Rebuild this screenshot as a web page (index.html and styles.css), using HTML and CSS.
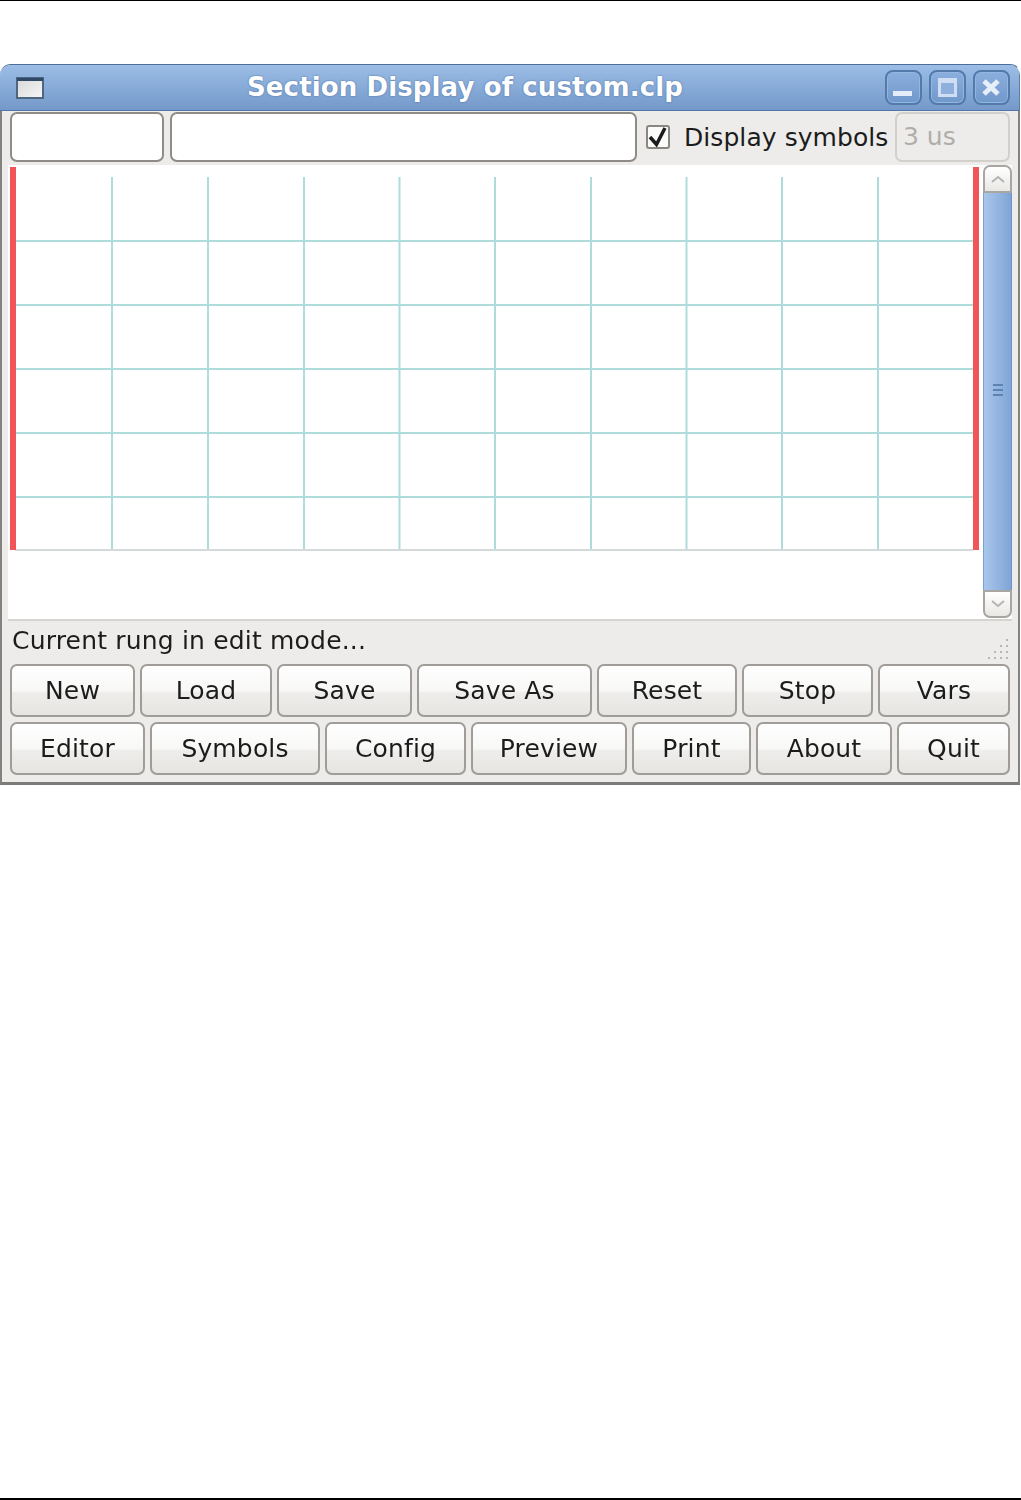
FILE: index.html
```html
<!DOCTYPE html>
<html lang="en">
<head>
<meta charset="utf-8">
<title>Section Display of custom.clp</title>
<link rel="stylesheet" href="styles.css">
</head>
<body>
<div class="page">
  <div class="window">
    <div class="titlebar">
      <svg class="win-icon" width="28" height="22" viewBox="0 0 28 22">
        <defs><linearGradient id="wi" x1="0" y1="0" x2="1" y2="1"><stop offset="0" stop-color="#d8d8d8"/><stop offset="1" stop-color="#f6f6f6"/></linearGradient></defs>
        <rect x="1" y="1" width="26" height="20" fill="url(#wi)" stroke="#4f6680" stroke-width="2"/>
        <rect x="1" y="1" width="26" height="3" fill="#2f4a68"/>
      </svg>
      <div class="title">Section Display of custom.clp</div>
      <div class="win-buttons">
        <div class="win-btn"><svg width="37" height="35" viewBox="0 0 37 35"><rect x="8" y="21" width="19" height="5" fill="#e3ecf8"/></svg></div>
        <div class="win-btn"><svg width="37" height="35" viewBox="0 0 37 35"><rect x="10.500" y="9.500" width="16" height="16" fill="#8fb0dc" stroke="#cfdef2" stroke-width="3"/><rect x="11" y="10" width="15" height="3" fill="#cfdef2"/></svg></div>
        <div class="win-btn"><svg width="37" height="35" viewBox="0 0 37 35"><path d="M11 11 L25 24 M25 11 L11 24" stroke="#e6eef9" stroke-width="5" fill="none"/></svg></div>
      </div>
    </div>
    <div class="content">
      <div class="toolbar">
        <div class="entry entry-small"></div>
        <div class="entry entry-wide"></div>
        <div class="check">
          <svg class="check-box" width="24" height="24" viewBox="0 0 24 24"><rect x="1" y="1" width="22" height="22" rx="2" fill="#fbfbfa" stroke="#8a8782" stroke-width="2"/><path d="M4 12 L10.500 19.500 L19 3" fill="none" stroke="#1c1c1c" stroke-width="3.500"/></svg>
          <span class="check-label">Display symbols</span>
        </div>
        <div class="entry entry-ro">3 us</div>
      </div>
      <div class="view">
        <div class="canvas">
          <svg width="976" height="455" viewBox="0 0 976 455">
            <g stroke="#aedcdc" stroke-width="2">
              <path d="M7 76H965M7 140H965M7 204H965M7 268H965M7 332H965" fill="none"/>
              <path d="M104 12V385M200 12V385M296 12V385M391.500 12V385M487 12V385M583 12V385M678.500 12V385M774 12V385M870 12V385" fill="none"/>
            </g>
            <path d="M7 385H965" stroke="#d4d9d9" stroke-width="2"/>
            <rect x="2" y="2" width="6" height="383" fill="#f25557"/>
            <rect x="965" y="2" width="6" height="383" fill="#f25557"/>
          </svg>
        </div>
        <div class="scrollbar">
          <div class="arrow arrow-up"><svg width="18" height="10" viewBox="0 0 18 10"><path d="M3 8 L9 3 L15 8" fill="none" stroke="#b4b4b2" stroke-width="2"/></svg></div>
          <div class="thumb"><svg class="thumb-grip" width="12" height="14" viewBox="0 0 12 14"><path d="M1 2H11M1 7H11M1 12H11" stroke="#5d83b3" stroke-width="2"/></svg></div>
          <div class="arrow arrow-down"><svg width="18" height="10" viewBox="0 0 18 10"><path d="M3 2 L9 7 L15 2" fill="none" stroke="#b4b4b2" stroke-width="2"/></svg></div>
        </div>
      </div>
      <div class="status">
        <span>Current rung in edit mode...</span>
        <svg class="grip" width="24" height="24" viewBox="0 0 24 24" fill="#b9b6b0">
          <rect x="20" y="2" width="2" height="2"/>
          <rect x="20" y="8" width="2" height="2"/><rect x="14" y="8" width="2" height="2"/>
          <rect x="20" y="14" width="2" height="2"/><rect x="14" y="14" width="2" height="2"/><rect x="8" y="14" width="2" height="2"/>
          <rect x="20" y="20" width="2" height="2"/><rect x="14" y="20" width="2" height="2"/><rect x="8" y="20" width="2" height="2"/><rect x="2" y="20" width="2" height="2"/>
        </svg>
      </div>
      <div class="btn-row btn-row-top">
        <div class="btn">New</div><div class="btn">Load</div><div class="btn">Save</div><div class="btn">Save As</div><div class="btn">Reset</div><div class="btn">Stop</div><div class="btn">Vars</div>
      </div>
      <div class="btn-row btn-row-bottom">
        <div class="btn">Editor</div><div class="btn">Symbols</div><div class="btn">Config</div><div class="btn">Preview</div><div class="btn">Print</div><div class="btn">About</div><div class="btn">Quit</div>
      </div>
    </div>
  </div>
</div>
</body>
</html>
```
FILE: styles.css
```css
* { box-sizing: border-box; }
html, body { margin: 0; padding: 0; background: #fff; }
.page {
  height: 1500px;
  width: 1021px;
  padding-top: 63px;
  border-top: 1px solid #000;
  border-bottom: 2px solid #000;
  font-family: "DejaVu Sans", sans-serif;
  color: #1c1c1c;
}
.window {
  width: 1021px;
  height: 721px;
  display: flex;
  flex-direction: column;
  border-radius: 11px 11px 0 0;
  overflow: hidden;
  background: #edecea;
  border-top: 1px solid #4b6d97;
  border-right: 1px solid #fff;
  filter: blur(0.4px);
}
.titlebar {
  height: 46px;
  flex: none;
  display: flex;
  align-items: center;
  position: relative;
  background: linear-gradient(#9bbde6, #7499c9);
  border-bottom: 1px solid #4f76a6;
  border-right: 1px solid #5c7ea8;
  padding: 0 9px 0 16px;
}
.win-icon { flex: none; }
.title {
  position: absolute;
  left: 247px;
  top: 6px;
  font-size: 26px;
  font-weight: 700;
  line-height: 32px;
  color: #fff;
  letter-spacing: 0.12px;
  white-space: nowrap;
  text-shadow: 0 0 2px #44689a;
}
.win-buttons { margin-left: auto; display: flex; gap: 7px; }
.win-btn {
  width: 37px;
  height: 35px;
  border: 2px solid #527aab;
  border-radius: 8px;
  background: linear-gradient(#8bafdd, #7198cb);
  box-shadow: inset 0 0 0 1px #95b6e0;
  display: flex;
  align-items: center;
  justify-content: center;
}
.win-btn svg { margin: -2px; flex: none; }
.content {
  flex: 1;
  min-height: 0;
  display: flex;
  flex-direction: column;
  border-left: 2px solid #85837f;
  border-right: 2px solid #85837f;
  border-bottom: 3px solid #7d7b77;
  padding: 0 8px 0 0;
}
.toolbar {
  height: 54px;
  flex: none;
  display: flex;
  align-items: center;
  gap: 6px;
  padding: 1px 0 3px 8px;
}
.entry {
  height: 50px;
  background: #fff;
  border: 2px solid #8f8c87;
  border-radius: 7px;
  flex: none;
  font-size: 25px;
  line-height: 46px;
  padding-left: 6px;
}
.entry-small { width: 154px; }
.entry-wide { width: 467px; }
.entry-ro {
  width: 115px;
  margin-left: 8px;
  background: #edecea;
  color: #b0aeaa;
  border: 2px solid #d2d0cc;
}
.check {
  display: flex;
  align-items: center;
  margin-left: 3px;
  flex: none;
  width: 235px;
}
.check-box { flex: none; }
.check-label { margin-left: 14px; font-size: 25px; white-space: nowrap; letter-spacing: 0.07px; }
.view {
  flex: none;
  height: 456px;
  display: flex;
  margin: 0 -2px 0 6px;
  background: #fff;
  border-bottom: 2px solid #d6d4d0;
}
.canvas { width: 975px; flex: none; overflow: hidden; }
.canvas svg { display: block; }
.scrollbar {
  width: 29px;
  flex: none;
  display: flex;
  flex-direction: column;
  padding: 0 0 1px 0;
}
.arrow {
  height: 28px;
  flex: none;
  background: linear-gradient(#fff, #e9e8e5);
  border: 2px solid #a8a6a2;
  display: flex;
  align-items: center;
  justify-content: center;
}
.arrow-up { border-radius: 7px 7px 0 0; }
.arrow-down { border-radius: 0 0 7px 7px; }
.thumb {
  flex: 1;
  background: linear-gradient(90deg, #a9c6ea, #7fa5d6);
  border-left: 1px solid #7ca0cf;
  border-right: 1px solid #6d93c6;
  display: flex;
  align-items: center;
  justify-content: center;
}
.thumb-grip { margin-top: -3px; }
.status {
  height: 43px;
  flex: none;
  display: flex;
  align-items: center;
  font-size: 25px;
  letter-spacing: 0.18px;
  padding: 0 0 4px 10px;
  position: relative;
}
.grip { position: absolute; right: 0; bottom: 3px; }
.btn-row {
  display: grid;
  gap: 5px;
  padding: 0 0 0 8px;
  height: 53px;
  flex: none;
  margin-bottom: 5px;
}
.btn-row-top { grid-template-columns: 125px 132px 135px 175px 140px 131px 132px; }
.btn-row-bottom { grid-template-columns: 135px 170px 141px 156px 119px 136px 113px; }
.btn {
  display: flex;
  align-items: center;
  justify-content: center;
  font-size: 25px;
  letter-spacing: 0.15px;
  white-space: nowrap;
  border: 2px solid #a09d98;
  border-radius: 7px;
  background: linear-gradient(#fefefe 0%, #f8f8f7 50%, #eeedeb 55%, #e6e5e2 100%);
}
```
